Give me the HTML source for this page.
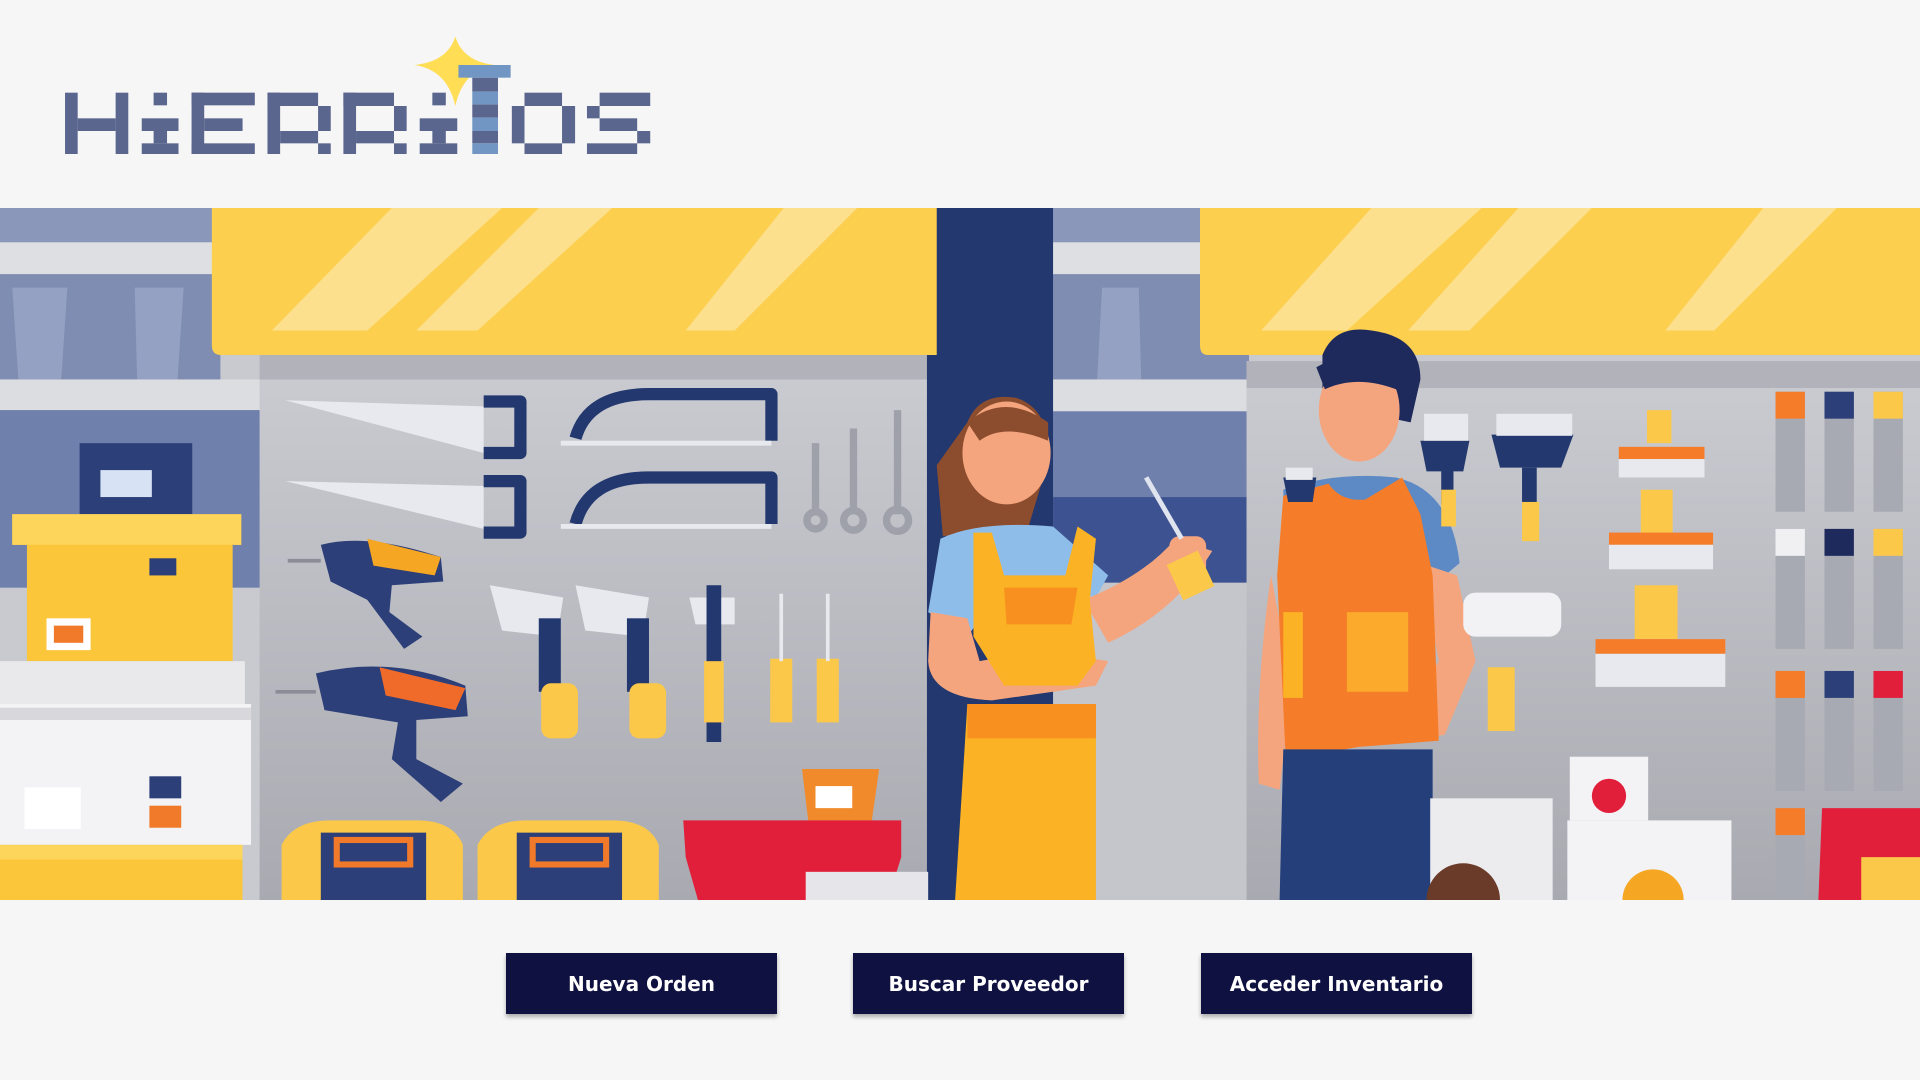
<!DOCTYPE html>
<html><head><meta charset="utf-8"><style>
html,body{margin:0;padding:0;background:#f6f6f6;width:1920px;height:1080px;overflow:hidden;font-family:"DejaVu Sans","Liberation Sans",sans-serif}
#logo{position:absolute;left:50px;top:30px;width:620px;height:135px}
#banner{position:absolute;left:0;top:208px;width:1920px;height:692px}
.btn{position:absolute;top:953px;width:271px;height:61px;background:#0f1140;color:#fff;font-weight:bold;font-size:20px;display:flex;align-items:center;justify-content:center;box-shadow:0 3px 4px rgba(0,0,0,.3)}
</style></head><body>
<svg id="logo" viewBox="0 0 1568 405" preserveAspectRatio="none">
<path d="M1025 20 Q1045 95 1125 105 Q1045 120 1025 228 Q1005 120 922 105 Q1005 95 1025 20Z" fill="#ffdd55"/>
<g fill="#5b668e">
<rect x="38" y="188" width="32" height="184"/><rect x="166" y="188" width="32" height="184"/><rect x="70" y="265" width="96" height="38"/>
<rect x="262" y="188" width="34" height="38"/><rect x="232" y="265" width="93" height="38"/><rect x="262" y="303" width="34" height="37"/><rect x="232" y="340" width="93" height="32"/>
<rect x="358" y="188" width="160" height="38"/><rect x="358" y="188" width="32" height="184"/><rect x="390" y="265" width="97" height="38"/><rect x="358" y="340" width="160" height="32"/>
<rect x="550" y="188" width="128" height="40"/><rect x="550" y="188" width="32" height="184"/><rect x="678" y="228" width="32" height="75"/><rect x="582" y="303" width="96" height="37"/><rect x="678" y="340" width="32" height="32"/>
<rect x="742" y="188" width="128" height="40"/><rect x="742" y="188" width="32" height="184"/><rect x="870" y="228" width="32" height="75"/><rect x="774" y="303" width="96" height="37"/><rect x="870" y="340" width="32" height="32"/>
<rect x="967" y="188" width="34" height="38"/><rect x="935" y="265" width="95" height="38"/><rect x="967" y="303" width="34" height="37"/><rect x="935" y="340" width="95" height="32"/>
<rect x="1200" y="188" width="95" height="40"/><rect x="1168" y="228" width="32" height="112"/><rect x="1295" y="228" width="33" height="112"/><rect x="1200" y="340" width="95" height="32"/>
<rect x="1390" y="188" width="128" height="40"/><rect x="1358" y="228" width="32" height="37"/><rect x="1390" y="265" width="95" height="38"/><rect x="1485" y="303" width="33" height="37"/><rect x="1358" y="340" width="127" height="32"/>
<rect x="1068" y="143" width="65" height="42"/><rect x="1068" y="223" width="65" height="40"/><rect x="1068" y="303" width="65" height="37"/>
</g>
<g fill="#7196c3"><rect x="1033" y="105" width="132" height="38"/><rect x="1068" y="185" width="65" height="38"/><rect x="1068" y="263" width="65" height="40"/><rect x="1068" y="340" width="65" height="32"/></g>
</svg>

<svg id="banner" viewBox="0 170 1568 565" preserveAspectRatio="none">
<defs>
<linearGradient id="peg" x1="0" y1="0" x2="0" y2="1"><stop offset="0" stop-color="#cbccd2"/><stop offset="1" stop-color="#a9aab1"/></linearGradient>
</defs>
<rect x="0" y="170" width="1568" height="565" fill="#c9cad0"/>
<rect x="0" y="170" width="180" height="30" fill="#8a97bb"/>
<rect x="0" y="198" width="180" height="26" fill="#dedfe3"/>
<rect x="0" y="224" width="180" height="86" fill="#7f8db3"/>
<path d="M10 235 L55 235 L50 310 L15 310Z M110 235 L150 235 L145 310 L112 310Z" fill="#94a1c3"/>
<rect x="0" y="310" width="215" height="25" fill="#dcdde1"/>
<rect x="0" y="335" width="215" height="145" fill="#6f80ad"/>
<rect x="860" y="170" width="160" height="30" fill="#8a97bb"/>
<rect x="860" y="198" width="160" height="26" fill="#dedfe3"/>
<rect x="860" y="224" width="160" height="86" fill="#7f8db3"/>
<path d="M900 235 L930 235 L932 310 L896 310Z" fill="#94a1c3"/>
<rect x="860" y="310" width="160" height="26" fill="#dcdde1"/>
<rect x="860" y="336" width="160" height="70" fill="#6f80ad"/>
<rect x="860" y="406" width="160" height="70" fill="#3d5290"/>
<rect x="860" y="476" width="160" height="260" fill="#c5c6cc"/>
<rect x="212" y="290" width="568" height="445" fill="url(#peg)"/>
<rect x="1018" y="295" width="550" height="440" fill="url(#peg)"/>
<rect x="1018" y="295" width="550" height="22" fill="#b2b3ba"/>
<rect x="212" y="290" width="568" height="20" fill="#b2b3ba"/>
<rect x="757" y="170" width="103" height="565" fill="#23386e"/>
<path d="M173 170 H765 V290 H180 Q173 290 173 282Z" fill="#fccf4f"/>
<path d="M980 170 H1568 V290 H986 Q980 290 980 282Z" fill="#fccf4f"/>
<g fill="#fde08e">
<path d="M320 170 H410 L300 270 H222Z"/><path d="M440 170 H500 L390 270 H340Z"/><path d="M640 170 H700 L600 270 H560Z"/>
<path d="M1120 170 H1210 L1100 270 H1030Z"/><path d="M1240 170 H1300 L1200 270 H1150Z"/><path d="M1440 170 H1500 L1400 270 H1360Z"/>
</g>
<rect x="65" y="362" width="92" height="58" fill="#2c3f78"/><rect x="82" y="384" width="42" height="22" fill="#d7e3f5"/>
<path d="M10 420 H197 V445 H190 V540 H22 V445 H10Z" fill="#fbc63a"/>
<rect x="10" y="420" width="187" height="25" fill="#fdd55a"/>
<rect x="38" y="505" width="36" height="26" fill="#fff"/><rect x="44" y="511" width="24" height="14" fill="#f07a2a"/>
<rect x="122" y="456" width="22" height="14" fill="#2c3f78"/>
<rect x="0" y="540" width="200" height="40" fill="#e9e9ec"/><rect x="0" y="575" width="205" height="115" fill="#f3f3f5"/>
<rect x="0" y="578" width="205" height="10" fill="#d8d8dc"/>
<rect x="20" y="643" width="46" height="34" fill="#fff"/><rect x="122" y="634" width="26" height="18" fill="#2c3f78"/><rect x="122" y="658" width="26" height="18" fill="#f07a2a"/>
<rect x="0" y="690" width="198" height="45" fill="#fbc63a"/><rect x="0" y="690" width="198" height="12" fill="#fdd55a"/>
<g fill="#e8e9ee"><path d="M233 327 L395 332 L395 370 Z"/><path d="M233 393 L395 397 L395 432 Z"/></g>
<g fill="none" stroke="#23386e" stroke-width="10" stroke-linejoin="round">
<path d="M395 328 H425 V370 H395"/><path d="M395 393 H425 V435 H395"/>
<path d="M470 358 Q480 322 530 322 H630 V360"/><path d="M470 428 Q480 390 530 390 H630 V428"/>
</g>
<g stroke="#e8e9ee" stroke-width="4"><line x1="458" y1="362" x2="630" y2="362"/><line x1="458" y1="430" x2="630" y2="430"/></g>
<g stroke="#9ea0aa" stroke-width="6" fill="none"><line x1="666" y1="362" x2="666" y2="420"/><line x1="697" y1="350" x2="697" y2="420"/><line x1="733" y1="335" x2="733" y2="420"/>
<circle cx="666" cy="425" r="7"/><circle cx="697" cy="425" r="8"/><circle cx="733" cy="425" r="9"/></g>
<g><path d="M262 445 Q300 435 360 455 L362 475 L320 478 L318 500 L345 520 L330 530 L300 490 L270 475Z" fill="#2c3f78"/>
<path d="M300 440 L360 455 L355 470 L305 462Z" fill="#f5a623"/><line x1="235" y1="458" x2="262" y2="458" stroke="#8a8c96" stroke-width="3"/>
<path d="M258 550 Q320 535 380 560 L382 585 L340 588 L340 620 L378 640 L360 655 L320 620 L325 590 L265 580Z" fill="#2c3f78"/>
<path d="M310 545 L380 562 L372 580 L315 568Z" fill="#f06a2a"/><line x1="225" y1="565" x2="258" y2="565" stroke="#8a8c96" stroke-width="3"/></g>
<g fill="#e8e9ee"><path d="M400 478 L460 488 L455 520 L410 515Z"/><path d="M470 478 L530 488 L525 520 L478 515Z"/><path d="M563 488 L600 488 L600 510 L568 510Z"/></g>
<g fill="#23386e"><rect x="440" y="505" width="18" height="60"/><rect x="512" y="505" width="18" height="60"/><rect x="577" y="478" width="12" height="128"/></g>
<g fill="#fcc84a"><rect x="442" y="558" width="30" height="45" rx="8"/><rect x="514" y="558" width="30" height="45" rx="8"/><rect x="575" y="540" width="16" height="50"/><rect x="629" y="538" width="18" height="52"/><rect x="667" y="538" width="18" height="52"/></g>
<g stroke="#e8e9ee" stroke-width="3"><line x1="638" y1="485" x2="638" y2="540"/><line x1="676" y1="485" x2="676" y2="540"/></g>
<g><path d="M230 690 Q240 670 270 670 H340 Q370 670 378 690 V735 H230Z" fill="#fcc84a"/><rect x="262" y="680" width="86" height="55" fill="#2c3f78"/><rect x="275" y="686" width="60" height="20" fill="none" stroke="#f07a2a" stroke-width="5"/>
<path d="M390 690 Q400 670 430 670 H500 Q530 670 538 690 V735 H390Z" fill="#fcc84a"/><rect x="422" y="680" width="86" height="55" fill="#2c3f78"/><rect x="435" y="686" width="60" height="20" fill="none" stroke="#f07a2a" stroke-width="5"/></g>
<path d="M655 628 H718 L712 670 H660Z" fill="#f18a2b"/><rect x="666" y="642" width="30" height="18" fill="#fff"/>
<path d="M558 670 H736 V700 L725 735 H570 L560 700Z" fill="#e21f3a"/>
<rect x="658" y="712" width="100" height="23" fill="#e6e6ea"/>
<path d="M790 345 Q800 320 830 325 Q860 335 855 380 L840 430 L770 438 L765 380Z" fill="#8c4d2e"/>
<ellipse cx="822" cy="370" rx="36" ry="42" fill="#f4a57e"/>
<path d="M790 345 Q820 320 856 345 L856 360 Q820 345 800 360Z" fill="#8c4d2e"/>
<path d="M768 440 Q800 425 860 430 L905 470 L895 488 L860 478 L820 478 L790 520 L758 500Z" fill="#8fbde9"/>
<path d="M760 500 L790 505 L800 540 Q850 530 905 540 L895 560 L810 572 Q760 570 758 540Z" fill="#f4a57e"/>
<path d="M885 490 Q935 470 960 440 L990 450 Q960 500 905 525Z" fill="#f4a57e"/>
<rect x="955" y="438" width="30" height="32" rx="8" fill="#f4a57e"/>
<line x1="936" y1="390" x2="965" y2="440" stroke="#dfe4ee" stroke-width="4"/><rect x="958" y="455" width="28" height="32" fill="#fcc84a" transform="rotate(-25 970 470)"/>
<path d="M795 435 L810 435 L820 470 H870 L880 430 L895 440 L890 490 L895 540 L880 560 L820 560 L795 520Z" fill="#fbb325"/>
<path d="M820 480 H880 L875 510 H822Z" fill="#f7901f"/>
<path d="M790 575 H895 V735 H780Z" fill="#fbb325"/><rect x="790" y="575" width="105" height="28" fill="#f7901f"/>
<path d="M1080 290 Q1090 265 1120 270 Q1160 275 1160 310 L1152 345 L1080 330Z" fill="#1e2a5c"/>
<ellipse cx="1110" cy="335" rx="33" ry="42" fill="#f4a57e"/>
<path d="M1075 300 Q1110 280 1150 305 L1145 320 Q1110 305 1082 318Z" fill="#1e2a5c"/>
<path d="M1048 400 Q1090 385 1140 390 Q1185 400 1192 460 L1180 470 L1150 460 L1050 470Z" fill="#5d8ac4"/>
<path d="M1038 470 Q1025 560 1028 640 L1045 645 L1055 560Z" fill="#f4a57e"/>
<path d="M1160 460 L1190 470 L1205 540 L1180 600 L1155 605 L1150 580 L1175 540Z" fill="#f4a57e"/>
<path d="M1048 405 L1085 395 Q1095 410 1115 408 L1145 390 L1160 420 L1170 470 L1175 605 L1110 610 L1050 620 L1043 470Z" fill="#f57d2a"/>
<rect x="1048" y="500" width="16" height="70" fill="#fbb325"/><rect x="1100" y="500" width="50" height="65" fill="#fbaa2b"/>
<path d="M1048 612 H1170 V735 H1045Z" fill="#253f7b"/>
<g fill="#23386e"><path d="M1160 360 H1200 L1195 385 H1165Z"/><path d="M1218 355 H1285 L1275 382 H1225Z"/><rect x="1177" y="382" width="10" height="30"/><rect x="1243" y="382" width="12" height="30"/><path d="M1048 390 H1075 L1072 410 H1052Z"/></g>
<g fill="#e8e9ee"><rect x="1222" y="338" width="62" height="18"/><rect x="1163" y="338" width="36" height="22"/><rect x="1050" y="382" width="22" height="10"/></g>
<g fill="#fcc84a"><rect x="1177" y="400" width="12" height="30"/><rect x="1243" y="410" width="14" height="32"/></g>
<rect x="1195" y="484" width="80" height="36" rx="10" fill="#f2f2f5"/><rect x="1215" y="545" width="22" height="52" fill="#fcc84a"/>
<g><path d="M1345 335 H1365 V362 H1345Z" fill="#fcc84a"/><rect x="1322" y="365" width="70" height="10" fill="#f57d2a"/><rect x="1322" y="375" width="70" height="15" fill="#e8e9ee"/>
<path d="M1340 400 H1366 V435 H1340Z" fill="#fcc84a"/><rect x="1314" y="435" width="85" height="10" fill="#f57d2a"/><rect x="1314" y="445" width="85" height="20" fill="#e8e9ee"/>
<path d="M1335 478 H1370 V522 H1335Z" fill="#fcc84a"/><rect x="1303" y="522" width="106" height="12" fill="#f57d2a"/><rect x="1303" y="534" width="106" height="27" fill="#e8e9ee"/></g>
<g>
<rect x="1450" y="320" width="24" height="98" fill="#a8aab3"/><rect x="1450" y="320" width="24" height="22" fill="#f57d2a"/>
<rect x="1490" y="320" width="24" height="98" fill="#a8aab3"/><rect x="1490" y="320" width="24" height="22" fill="#2c3f78"/>
<rect x="1530" y="320" width="24" height="98" fill="#a8aab3"/><rect x="1530" y="320" width="24" height="22" fill="#fcc84a"/>
<rect x="1450" y="432" width="24" height="98" fill="#a8aab3"/><rect x="1450" y="432" width="24" height="22" fill="#f0f0f3"/>
<rect x="1490" y="432" width="24" height="98" fill="#a8aab3"/><rect x="1490" y="432" width="24" height="22" fill="#1e2a5c"/>
<rect x="1530" y="432" width="24" height="98" fill="#a8aab3"/><rect x="1530" y="432" width="24" height="22" fill="#fcc84a"/>
<rect x="1450" y="548" width="24" height="98" fill="#a8aab3"/><rect x="1450" y="548" width="24" height="22" fill="#f57d2a"/>
<rect x="1490" y="548" width="24" height="98" fill="#a8aab3"/><rect x="1490" y="548" width="24" height="22" fill="#2c3f78"/>
<rect x="1530" y="548" width="24" height="98" fill="#a8aab3"/><rect x="1530" y="548" width="24" height="22" fill="#e21f3a"/>
<rect x="1450" y="660" width="24" height="75" fill="#a8aab3"/><rect x="1450" y="660" width="24" height="22" fill="#f57d2a"/>
</g>
<rect x="1282" y="618" width="64" height="52" fill="#f3f3f5"/><circle cx="1314" cy="650" r="14" fill="#e21f3a"/>
<rect x="1168" y="652" width="100" height="83" fill="#ececef"/><rect x="1280" y="670" width="134" height="65" fill="#f3f3f5"/>
<circle cx="1195" cy="735" r="30" fill="#6b3b2a"/><circle cx="1350" cy="735" r="25" fill="#f5a623"/>
<path d="M1488 660 H1568 V735 H1485Z" fill="#e21f3a"/><rect x="1520" y="700" width="48" height="35" fill="#fcc84a"/>
</svg>

<div class="btn" style="left:506px">Nueva Orden</div>
<div class="btn" style="left:853px">Buscar Proveedor</div>
<div class="btn" style="left:1201px">Acceder Inventario</div>
</body></html>
